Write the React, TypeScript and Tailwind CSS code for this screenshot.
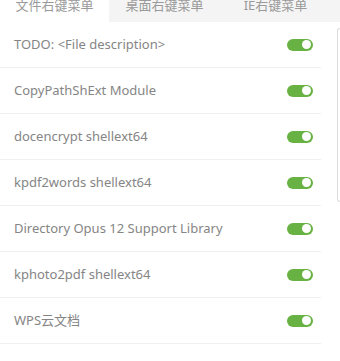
import { useState } from "react";

const items = [
  "TODO: <File description>",
  "CopyPathShExt Module",
  "docencrypt shellext64",
  "kpdf2words shellext64",
  "Directory Opus 12 Support Library",
  "kphoto2pdf shellext64",
  "WPS云文档",
  "Shell Extension",
];

const tabs = [
  { label: "文件右键菜单", w: "w-[109px]" },
  { label: "桌面右键菜单", w: "w-[111px]" },
  { label: "IE右键菜单", w: "w-[111px]" },
];

function Toggle({ on, onClick }: { on: boolean; onClick: () => void }) {
  return (
    <button
      onClick={onClick}
      className={`w-[26px] h-[12px] rounded-full flex items-center px-[2px] ${on ? "bg-[#68b244] justify-end" : "bg-[#ccc] justify-start"}`}
    >
      <span className="w-[9px] h-[9px] rounded-full bg-white" />
    </button>
  );
}

export default function App() {
  const [active, setActive] = useState(0);
  const [enabled, setEnabled] = useState(items.map(() => true));

  return (
    <div
      className="w-[340px] h-[361px] overflow-hidden bg-white text-[13px]"
      style={{ fontFamily: '"Noto Sans", "Noto Sans CJK SC", sans-serif' }}
    >
      <div className="flex h-[22px] bg-[#f4f4f4]">
        {tabs.map((t, i) => (
          <div
            key={t.label}
            onClick={() => setActive(i)}
            className={`${t.w} text-center leading-[13px] -mt-[1px] text-[#9a9a9a] ${active === i ? "bg-white" : ""}`}
          >
            {t.label}
          </div>
        ))}
      </div>
      <div className="flex">
        <div className="w-[321px]">
          {items.map((name, i) => (
            <div key={name} className="h-[46px] border-b border-[#f0f0f0] flex items-center justify-between pl-[14px] pr-[8px]">
              <span className="text-[#858585]">{name}</span>
              <Toggle
                on={enabled[i]}
                onClick={() => setEnabled(enabled.map((v, j) => (j === i ? !v : v)))}
              />
            </div>
          ))}
        </div>
        <div className="ml-auto flex flex-col justify-between">
          <div className="mt-[6px] w-[3px] h-[174px] border-l border-t border-b border-[#dcdcdc] rounded-l-[3px]" />
          <div className="mb-[5px] w-[1px] h-[1px] bg-[#999]" />
        </div>
      </div>
    </div>
  );
}
